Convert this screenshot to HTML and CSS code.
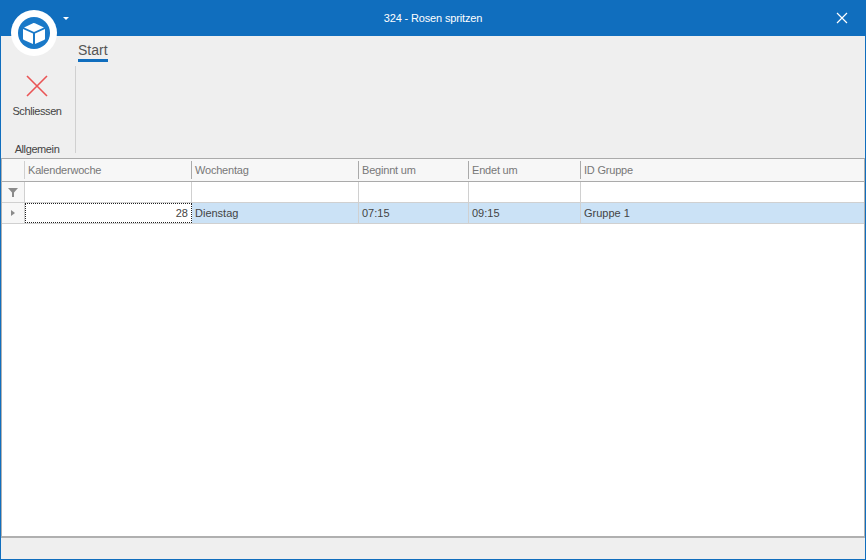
FILE: index.html
```html
<!DOCTYPE html>
<html lang="de">
<head>
    <meta charset="UTF-8">
    <title>324 - Rosen spritzen</title>
    <link rel="stylesheet" href="styles.css">
</head>
<body>
    <div class="window">
        <!-- Title bar -->
        <header class="titlebar">
            <span class="menu-arrow"></span>
            <span class="title">324 - Rosen spritzen</span>
            <svg class="close" width="12" height="12" viewBox="0 0 12 12">
                <path d="M1 1 L11 11 M11 1 L1 11" stroke="#fff" stroke-width="1.2" fill="none"/>
            </svg>
        </header>

        <!-- App logo lies over title bar and ribbon -->
        <div class="logo">
            <svg width="32" height="32" viewBox="0 0 32 32">
                <circle cx="16" cy="16" r="16" fill="#1a79c8"/>
                <path d="M15.5 6 Q16 5.8 17 6.3 L26 10.5 L16 15 L6 10.5 Z" fill="#fff"/>
                <path d="M5 12 L15 16.5 L15 27 L6 23 Q5 22.5 5 21.5 Z" fill="#fff"/>
                <path d="M27 12 L17 16.5 L17 27 L26 23 Q27 22.5 27 21.5 Z" fill="#fff"/>
            </svg>
        </div>

        <!-- Ribbon -->
        <section class="ribbon">
            <div class="tabs">
                <span class="tab">Start</span>
            </div>
            <div class="group">
                <button class="ribbon-button">
                    <svg width="22" height="22" viewBox="0 0 22 22">
                        <path d="M1 1 L21 21 M21 1 L1 21" stroke="#ea5455" stroke-width="1.6" fill="none"/>
                    </svg>
                    <span>Schliessen</span>
                </button>
                <span class="group-label">Allgemein</span>
            </div>
        </section>

        <!-- Data grid -->
        <section class="grid">
            <div class="row header">
                <div class="cell indicator"></div>
                <div class="cell"><span>Kalenderwoche</span></div>
                <div class="cell"><span>Wochentag</span></div>
                <div class="cell"><span>Beginnt um</span></div>
                <div class="cell"><span>Endet um</span></div>
                <div class="cell"><span>ID Gruppe</span></div>
            </div>
            <div class="row filter">
                <div class="cell indicator">
                    <svg width="10" height="9" viewBox="0 0 10 9">
                        <path d="M0 0 H10 L6 4.5 V9 H4 V4.5 Z" fill="#8a8a8a"/>
                    </svg>
                </div>
                <div class="cell"></div>
                <div class="cell"></div>
                <div class="cell"></div>
                <div class="cell"></div>
                <div class="cell"></div>
            </div>
            <div class="row data">
                <div class="cell indicator"><span class="row-arrow"></span></div>
                <div class="cell focused">28</div>
                <div class="cell">Dienstag</div>
                <div class="cell">07:15</div>
                <div class="cell">09:15</div>
                <div class="cell">Gruppe 1</div>
            </div>
        </section>

        <footer class="statusbar"></footer>
    </div>
</body>
</html>
```

FILE: styles.css
```css
/* General Styles */
html, body {
    margin: 0;
    height: 100%;
    overflow: hidden;
}

body {
    font-family: "Liberation Sans", Arial, sans-serif;
    font-size: 11px;
    color: #444;
}

/* Window */
.window {
    position: relative;
    display: flex;
    flex-direction: column;
    height: 560px;
    box-sizing: border-box;
    border: 1px solid #106ebe;
    border-top: none;
    background: #efefef;
}

/* Title bar */
.titlebar {
    position: relative;
    flex: 0 0 36px;
    display: flex;
    align-items: center;
    justify-content: center;
    margin: 0 -1px;
    background: #106ebe;
    color: #fff;
}

.title {
    letter-spacing: -0.15px;
}

.menu-arrow {
    position: absolute;
    left: 63px;
    top: 17px;
    border: 3px solid transparent;
    border-top: 3px solid #fff;
}

.close {
    position: absolute;
    right: 18px;
    top: 12px;
}

/* Logo */
.logo {
    position: absolute;
    left: 10px;
    top: 10px;
    width: 46px;
    height: 46px;
    display: flex;
    align-items: center;
    justify-content: center;
    border-radius: 50%;
    background: #fff;
}

/* Ribbon */
.ribbon {
    position: relative;
    flex: 0 0 122px;
    box-sizing: border-box;
}

.tabs {
    padding: 7px 0 0 77px;
}

.tab {
    display: inline-block;
    height: 16px;
    font-size: 14px;
    line-height: 15px;
    border-bottom: 3px solid #106ebe;
    color: #555;
}

.group {
    position: absolute;
    left: 0;
    top: 30px;
    width: 72px;
    height: 87px;
    padding-right: 2px;
    display: flex;
    flex-direction: column;
    align-items: center;
    border-right: 1px solid #d0d0d0;
    letter-spacing: -0.4px;
}

.ribbon-button {
    display: flex;
    flex-direction: column;
    align-items: center;
    gap: 8px;
    padding: 9px 0 0;
    border: none;
    background: none;
    font: inherit;
    letter-spacing: inherit;
    color: #444;
}

.group-label {
    margin-top: auto;
    margin-bottom: -2px;
}

/* Data grid */
.grid {
    flex: 1;
    background: #fff;
    border-top: 1px solid #aaa;
    border-bottom: 2px solid #b0b0b0;
    border-left: 1px solid #b0b0b0;
    border-right: 1px solid #b0b0b0;
}

.row {
    display: grid;
    grid-template-columns: 23px 167px 167px 110px 112px 1fr;
}

.cell {
    box-sizing: border-box;
    padding: 0 3px;
    border-right: 1px solid #d0d0d0;
    white-space: nowrap;
}

.cell:last-child {
    border-right: none;
}

.indicator {
    display: flex;
    align-items: center;
    justify-content: center;
    padding: 0;
    background: #f7f7f7;
    border-right: 1px solid #d0d0d0;
}

.row.header {
    height: 23px;
    background: #f7f7f7;
    border-bottom: 1px solid #aaa;
    box-sizing: border-box;
    align-items: center;
    color: #777;
    letter-spacing: -0.2px;
}

.row.header .cell {
    height: 18px;
    line-height: 18px;
    border-right: 1px solid #aaa;
}

.row.header .cell:last-child {
    border-right: none;
}

.row.header .indicator {
    border-right: 1px solid #d0d0d0;
}

.row.filter {
    height: 21px;
    border-bottom: 1px solid #d0d0d0;
    box-sizing: border-box;
}

.row.data {
    height: 21px;
    line-height: 20px;
    background: #cbe2f6;
    border-bottom: 1px solid #d0d0d0;
    box-sizing: border-box;
}

.row.data .indicator {
    background: #f7f7f7;
}

.cell.focused {
    background: #fff;
    text-align: right;
    line-height: 18px;
    border: 1px dotted #222;
}

.row-arrow {
    border: 3.5px solid transparent;
    border-left: 4px solid #8a8a8a;
    border-right: none;
}

/* Status bar */
.statusbar {
    flex: 0 0 21px;
    background: #efefef;
}
```
